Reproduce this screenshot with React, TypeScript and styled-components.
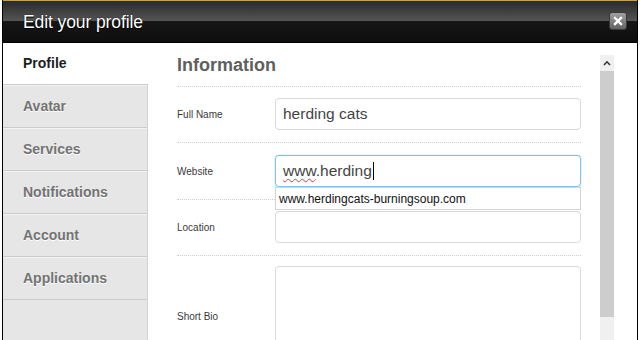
import React from "react";
import styled, { createGlobalStyle } from "styled-components";

const GlobalStyle = createGlobalStyle`
  html, body { margin: 0; padding: 0; background: #fff; }
  body { font-family: "Liberation Sans", Arial, sans-serif; }
  * { box-sizing: border-box; }
`;

const Frame = styled.div`
  margin-left: 2px;
  width: 636px;
  height: 340px;
  border-left: 1px solid #000;
  border-right: 1px solid #000;
  display: flex;
  flex-direction: column;
  overflow: hidden;
  background: #fff;
`;

const TitleBar = styled.div`
  height: 43px;
  flex: none;
  border-top: 1px solid #c9a24c;
  border-bottom: 1px solid #000;
  background: linear-gradient(#2a2a2a 0%, #545454 48%, #161616 50%, #0e0e0f 100%);
  display: flex;
  align-items: center;
  justify-content: space-between;
  padding: 2px 10px 0 20px;
`;

const Title = styled.h1`
  margin: 0;
  font-size: 17.5px;
  font-weight: normal;
  color: #fff;
  text-shadow: 0 1px 1px #000, 0 0 1px #000;
  letter-spacing: -0.1px;
`;

const CloseButton = styled.div`
  width: 18px;
  height: 18px;
  border-radius: 3px;
  border: 1px solid #3a3a3a;
  background: linear-gradient(#a0a0a0, #626262);
  display: flex;
  align-items: center;
  justify-content: center;
  margin-top: -3px;
`;

const Body = styled.div`
  flex: 1;
  display: flex;
  min-height: 0;
`;

const Sidebar = styled.nav`
  width: 145px;
  flex: none;
  background: #e6e6e6;
  border-right: 1px solid #d2d2d2;
  display: flex;
  flex-direction: column;
`;

const Tab = styled.div<{ $active?: boolean }>`
  height: ${(p) => (p.$active ? "42px" : "43px")};
  flex: none;
  display: flex;
  align-items: center;
  padding: 0 0 2px 20px;
  font-size: 14px;
  font-weight: bold;
  color: ${(p) => (p.$active ? "#1e1e1e" : "#737373")};
  text-shadow: 0 1px 0 #fff;
  background: ${(p) => (p.$active ? "#fff" : "#e6e6e6")};
  border-top: 1px solid ${(p) => (p.$active ? "#fff" : "#f3f3f3")};
  border-bottom: 1px solid #cbcbcb;
  margin-right: ${(p) => (p.$active ? "-1px" : "0")};
`;

const Content = styled.section`
  flex: 1;
  display: flex;
  min-width: 0;
`;

const Main = styled.div`
  width: 404px;
  flex: none;
  margin-left: 29px;
`;

const Heading = styled.h2`
  margin: 0;
  height: 44px;
  border-bottom: 1px dotted #cfcfcf;
  display: flex;
  align-items: center;
  font-size: 18px;
  font-weight: bold;
  color: #606060;
  padding-top: 1px;
`;

const Row = styled.div<{ $top?: number }>`
  display: grid;
  grid-template-columns: 98px 306px;
  align-items: center;
  padding: ${(p) => p.$top ?? 11}px 0 12px;
  border-bottom: 1px dotted #cfcfcf;
  position: relative;
`;

const Label = styled.label`
  font-size: 10px;
  color: #3a3a3a;
`;

const Field = styled.div<{ $focused?: boolean; $tall?: boolean }>`
  position: relative;
  height: ${(p) => (p.$tall ? "100px" : "32px")};
  border: 1px solid ${(p) => (p.$focused ? "#86bfea" : "#d9d9d9")};
  box-shadow: ${(p) => (p.$focused ? "0 0 2px #a8d4f4" : "none")};
  border-radius: 4px;
  padding: 0 7px;
  display: flex;
  align-items: center;
  font-size: 15.5px;
  color: #444;
  background: #fff;
`;

const Misspelled = styled.span`
  text-decoration: underline wavy #e0393a;
  text-decoration-thickness: 1px;
  text-underline-offset: 2px;
`;

const Caret = styled.span`
  display: inline-block;
  width: 1px;
  height: 18px;
  background: #000;
  margin-left: 1px;
  vertical-align: middle;
`;

const Suggestions = styled.div`
  position: absolute;
  left: -1px;
  right: -1px;
  top: calc(100% + 1px);
  height: 23px;
  border: 1px solid #d4d4d4;
  background: #fff;
  z-index: 2;
  display: flex;
  align-items: center;
  padding-left: 3px;
  font-size: 12px;
  color: #111;
`;

const Scrollbar = styled.div`
  width: 14px;
  flex: none;
  margin-left: 19px;
  margin-top: 12px;
  display: flex;
  flex-direction: column;
`;

const ScrollButton = styled.div`
  height: 16px;
  flex: none;
  background: #f0f0f0;
  display: flex;
  align-items: center;
  justify-content: center;
`;

const Thumb = styled.div`
  height: 246px;
  flex: none;
  background: #cdcdcd;
`;

const Track = styled.div`
  flex: 1;
  background: #f0f0f0;
`;

const tabs = ["Profile", "Avatar", "Services", "Notifications", "Account", "Applications"];

export default function App() {
  return (
    <>
      <GlobalStyle />
      <Frame>
        <TitleBar>
          <Title>Edit your profile</Title>
          <CloseButton>
            <svg width="10" height="10" viewBox="0 0 10 10">
              <path d="M2 2 L8 8 M8 2 L2 8" stroke="#fff" strokeWidth="2.4" strokeLinecap="square" />
            </svg>
          </CloseButton>
        </TitleBar>
        <Body>
          <Sidebar>
            {tabs.map((t, i) => (
              <Tab key={t} $active={i === 0}>
                {t}
              </Tab>
            ))}
          </Sidebar>
          <Content>
            <Main>
              <Heading>Information</Heading>
              <Row>
                <Label>Full Name</Label>
                <Field>herding cats</Field>
              </Row>
              <Row $top={12}>
                <Label>Website</Label>
                <Field $focused>
                  <span>
                    <Misspelled>www</Misspelled>.herding
                  </span>
                  <Caret />
                  <Suggestions>www.herdingcats-burningsoup.com</Suggestions>
                </Field>
              </Row>
              <Row>
                <Label>Location</Label>
                <Field />
              </Row>
              <Row $top={10}>
                <Label>Short Bio</Label>
                <Field $tall />
              </Row>
            </Main>
            <Scrollbar>
              <ScrollButton>
                <svg width="8" height="6" viewBox="0 0 8 6">
                  <path d="M1 5 L4 1.8 L7 5" fill="none" stroke="#333" strokeWidth="1.6" />
                </svg>
              </ScrollButton>
              <Thumb />
              <Track />
            </Scrollbar>
          </Content>
        </Body>
      </Frame>
    </>
  );
}
